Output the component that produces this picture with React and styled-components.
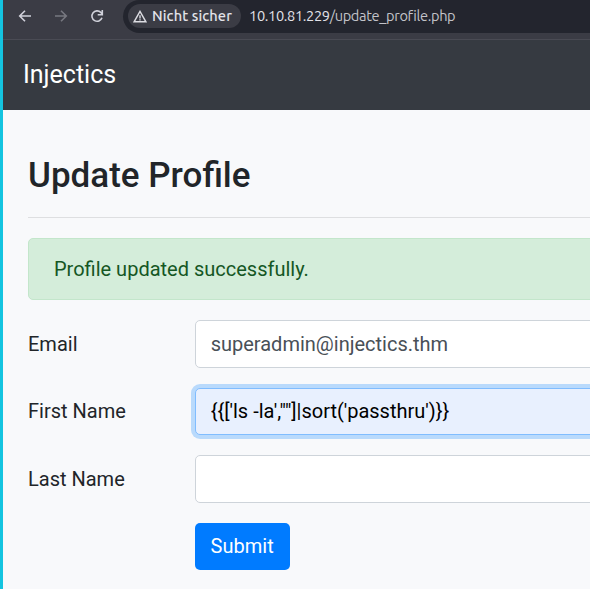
import React from "react";
import styled, { createGlobalStyle } from "styled-components";

const GlobalStyle = createGlobalStyle`
  * { box-sizing: border-box; }
  body { margin: 0; overflow: hidden; background: #f8f9fa; }
`;

const Window = styled.div`
  height: 589px;
  border-left: 3px solid #14c4e0;
  background: #f8f9fb;
  overflow: hidden;
  font-family: Roboto, sans-serif;
  font-size: 20px;
  line-height: 30px;
  color: #212529;
`;

const Toolbar = styled.div`
  display: flex;
  align-items: flex-start;
  height: 40px;
  padding-left: 14px;
  background: #3b3c45;
  border-bottom: 1px solid #4a4b54;
  font-family: Ubuntu, "Noto Sans", sans-serif;
`;

const NavIcon = styled.svg`
  flex: none;
  width: 16px;
  height: 16px;
  margin: 8px 20px 0 0;
  fill: none;
  stroke: ${(p) => (p.$disabled ? "#777880" : "#d0d1da")};
  stroke-width: 1.6;
`;

const AddressBar = styled.div`
  display: flex;
  flex: 1;
  height: 33px;
  margin-left: -2px;
  padding: 4px 0 5px 5px;
  background: #23252e;
  border-radius: 17px 0 0 17px;
`;

const SecurityChip = styled.div`
  display: flex;
  flex: none;
  align-items: center;
  width: 113px;
  height: 24px;
  padding-left: 5px;
  border-radius: 12px;
  background: #3b3c45;
  color: #e3e3e9;
  font-size: 14.6px;
  font-weight: 500;
  letter-spacing: 0.1px;
  white-space: nowrap;
`;

const WarningIcon = styled.svg`
  flex: none;
  width: 14px;
  height: 13px;
  margin-right: 5px;
  fill: none;
  stroke: #dcdce2;
  stroke-width: 1.4;
`;

const Address = styled.div`
  margin-left: 8px;
  color: #e3e3e9;
  font-size: 14.6px;
  line-height: 24px;
  letter-spacing: -0.35px;
  white-space: nowrap;
`;

const Path = styled.span`
  color: #c2c3c9;
`;

const Navbar = styled.header`
  height: 70px;
  padding: 16px 20px;
  background: #363a41;
  color: #fff;
  font-size: 25px;
  line-height: 37.5px;
`;

const Content = styled.main`
  width: 640px;
  padding: 45px 25px 0;
`;

const Title = styled.h3`
  margin: 0;
  font-size: 35px;
  font-weight: 500;
  line-height: 42px;
`;

const Divider = styled.hr`
  margin: 20px 0;
  border: 0;
  border-top: 1px solid #dedfe1;
`;

const Alert = styled.div`
  margin-bottom: 20px;
  padding: 15px 25px;
  border: 1px solid #c3e6cb;
  border-radius: 5px;
  background: #d4edda;
  color: #155724;
`;

const Row = styled.div`
  display: flex;
  align-items: center;
  height: 47.5px;
  margin-bottom: 20px;
`;

const Label = styled.label`
  flex: none;
  width: 166.67px;
`;

const Input = styled.input`
  flex: 1;
  min-width: 0;
  height: 47.5px;
  padding: 7.5px 15px;
  border: 1px solid ${(p) => (p.$active ? "#80bdff" : "#ced4da")};
  border-radius: 5px;
  outline: none;
  background: ${(p) => (p.$active ? "#e8f0fe" : "#fff")};
  color: ${(p) => (p.$active ? "#000" : "#495057")};
  box-shadow: ${(p) => (p.$active ? "0 0 0 4px #b9dafc" : "none")};
  font: inherit;
`;

const Submit = styled.button`
  width: 95px;
  height: 47px;
  margin-left: 166.67px;
  padding: 0;
  border: 0;
  border-radius: 5px;
  background: #007bff;
  color: #fff;
  font: inherit;
`;

const fields = [
  { id: "email", label: "Email", value: "superadmin@injectics.thm" },
  { id: "first", label: "First Name", value: `{{['ls -la',""]|sort('passthru')}}`, active: true },
  { id: "last", label: "Last Name", value: "" },
];

export default function App() {
  return (
    <Window>
      <GlobalStyle />
      <Toolbar>
        <NavIcon viewBox="0 0 16 16"><path d="M14 8H3M8 2.7 2.7 8 8 13.3" /></NavIcon>
        <NavIcon viewBox="0 0 16 16" $disabled><path d="M2 8h11M8 2.7 13.3 8 8 13.3" /></NavIcon>
        <NavIcon viewBox="0 0 16 16">
          <path d="M13 9.8A5.2 5.2 0 1 1 11.8 4.4L13.2 6M13.3 2v4.7H8.7" />
        </NavIcon>
        <AddressBar>
          <SecurityChip>
            <WarningIcon viewBox="0 0 14 13">
              <path d="M7 1.4 1.1 11.8h11.8ZM7 5.2v3.2M7 9.2v1.4" />
            </WarningIcon>
            Nicht sicher
          </SecurityChip>
          <Address>10.10.81.229<Path>/update_profile.php</Path></Address>
        </AddressBar>
      </Toolbar>
      <Navbar>Injectics</Navbar>
      <Content>
        <Title>Update Profile</Title>
        <Divider />
        <Alert>Profile updated successfully.</Alert>
        {fields.map((f) => (
          <Row key={f.id}>
            <Label htmlFor={f.id}>{f.label}</Label>
            <Input id={f.id} defaultValue={f.value} $active={f.active} spellCheck={false} />
          </Row>
        ))}
        <Submit type="button">Submit</Submit>
      </Content>
    </Window>
  );
}
